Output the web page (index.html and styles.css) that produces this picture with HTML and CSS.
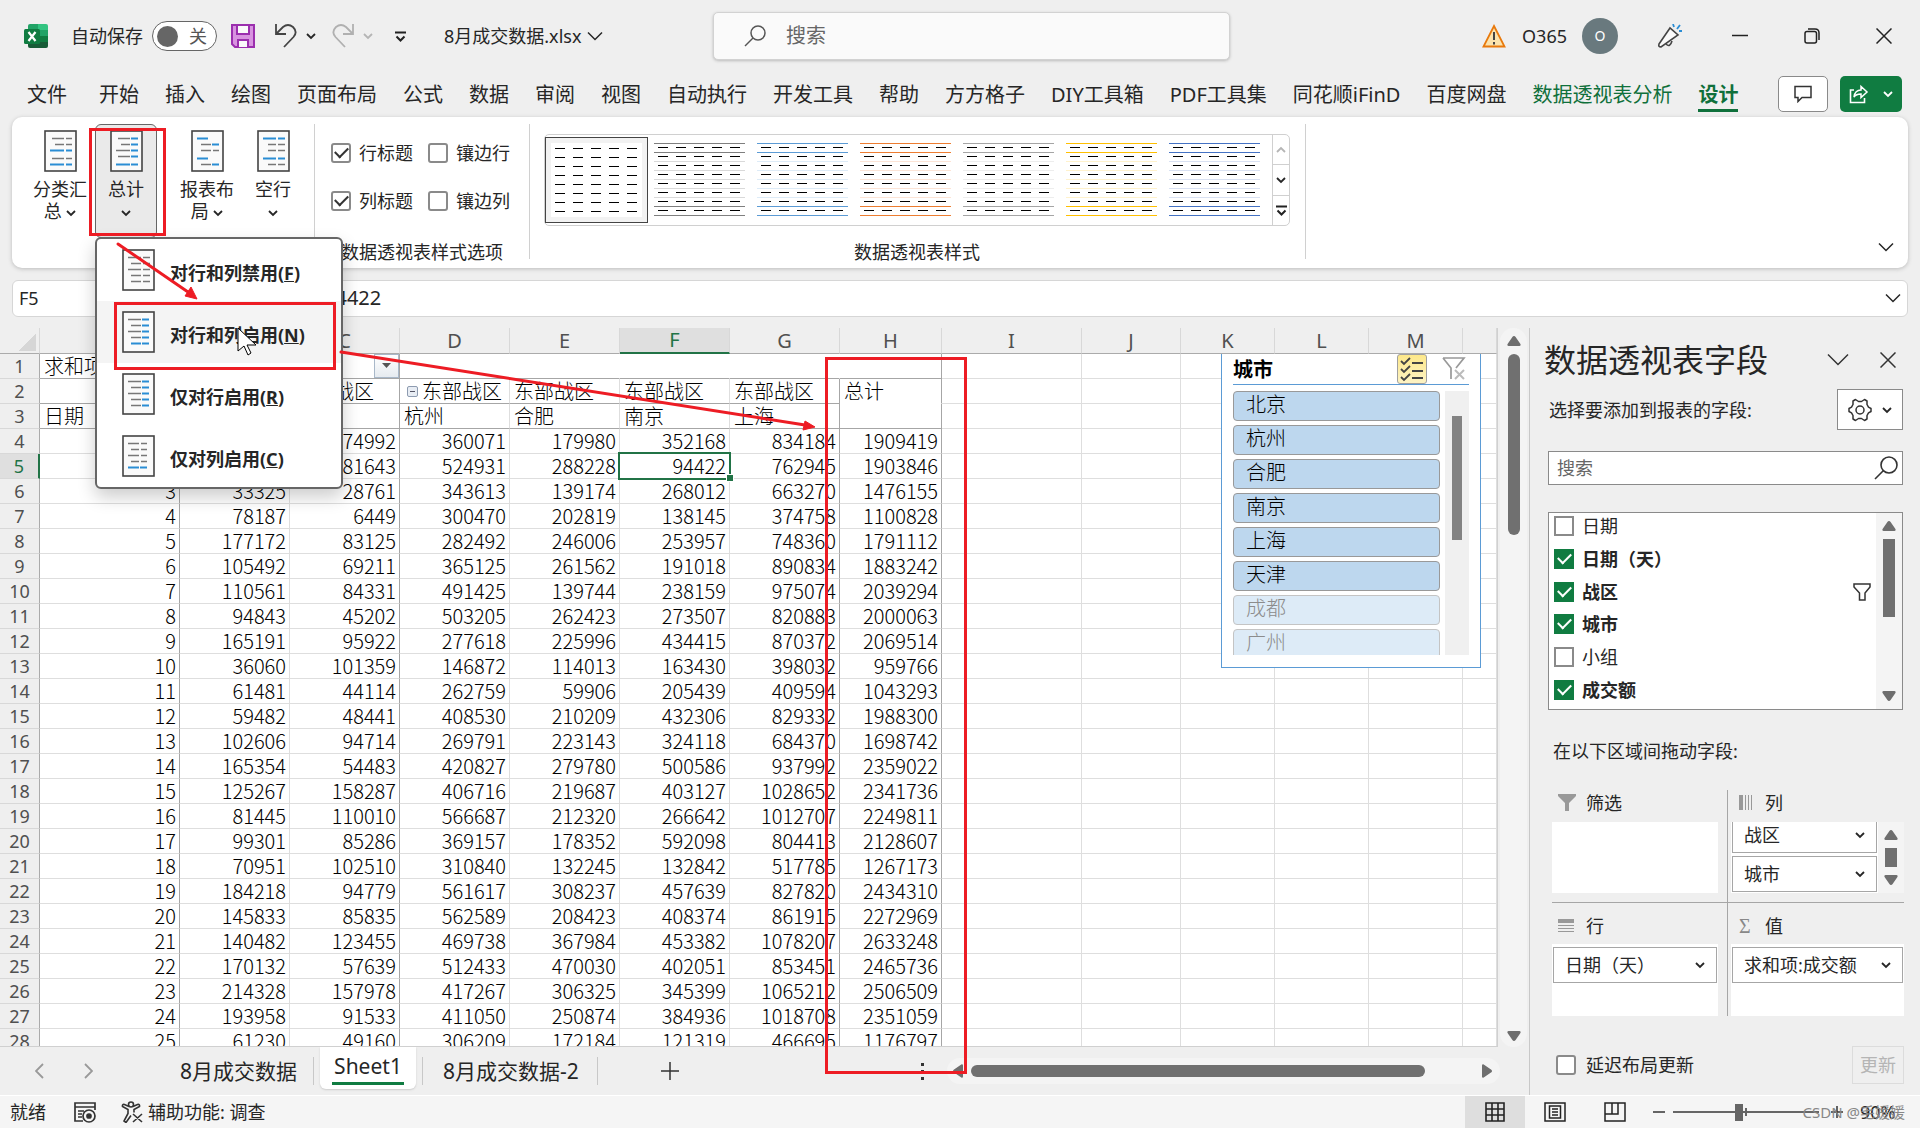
FILE: index.html
```html
<!DOCTYPE html>
<html lang="zh-CN">
<head>
<meta charset="utf-8">
<title>8月成交数据.xlsx - Excel</title>
<link rel="stylesheet" href="styles.css">
</head>
<body>
<svg class="defs" aria-hidden="true">
  <symbol id="chev" viewBox="0 0 10 10"><path d="M1 3l4 4 4-4" fill="none" stroke="currentColor" stroke-width="1.800"/></symbol>
  <symbol id="chev-wide" viewBox="0 0 16 10"><path d="M1 1.500l7 7 7-7" fill="none" stroke="currentColor" stroke-width="1.500"/></symbol>
  <symbol id="tri" viewBox="0 0 14 10"><path d="M7 0q1 0 1.600 1l5 7.300Q14 10 12.500 10h-11Q0 10 .4 8.300l5-7.300Q6 0 7 0z" fill="#6e6e6e"/></symbol>
</svg>

<header class="titlebar">
  <div class="quick">
    <svg class="logo" width="24" height="24" viewBox="0 0 24 24"><path d="M6 0h9v6H4V2q0-2 2-2z" fill="#21a366"/><path d="M14 0h8q2 0 2 2v4H14z" fill="#33c481"/><path d="M4 6h10v12H4z" fill="#107c41"/><path d="M14 6h10v6H14z" fill="#21a366"/><path d="M14 12h10v6H14z" fill="#107c41"/><path d="M4 18h20v4q0 2-2 2H6q-2 0-2-2z" fill="#185c37"/><rect y="5" width="16" height="15" rx="1.500" fill="#107c41"/><path d="M4.500 8l7 9M11.500 8l-7 9" stroke="#fff" stroke-width="2.200"/></svg>
    <label class="autosave" for="autosave">自动保存</label>
    <span class="toggle"><input id="autosave" type="checkbox" role="switch"><span>关</span></span>
    <button class="plain save" aria-label="保存"><svg width="24" height="24" viewBox="0 0 24 24"><path d="M1 1h22v22H4l-3-3z" fill="#d893e0" stroke="#9b2fae" stroke-width="2"/><path d="M6 1h12v9H6z" fill="#fafafa" stroke="#9b2fae" stroke-width="2"/><path d="M7 23v-7h10v7" fill="#fafafa" stroke="#9b2fae" stroke-width="2"/></svg></button>
    <button class="plain undo" aria-label="撤消"><svg width="22" height="24" viewBox="0 0 22 24"><path d="M1 0v10h10M1.500 9.500L8 3q5-4 10 0 5 5 .5 10L9 23" fill="none" stroke="#444" stroke-width="1.800"/></svg></button>
    <svg class="sm" width="10" height="10"><use href="#chev"/></svg>
    <button class="plain redo" aria-label="恢复"><svg width="22" height="24" viewBox="0 0 22 24"><path d="M21 0v10H11M20.500 9.500L14 3Q9-1 4 3-1 8 3.500 13l9.500 10" fill="none" stroke="#b0b0b0" stroke-width="1.800"/></svg></button>
    <svg class="sm dim" width="10" height="10"><use href="#chev"/></svg>
    <button class="plain custom" aria-label="自定义快速访问工具栏"><svg width="11" height="11" viewBox="0 0 11 11"><path d="M0 1.500h11M1.500 5.500l4 4 4-4" fill="none" stroke="#222" stroke-width="2"/></svg></button>
    <button class="plain filename">8月成交数据.xlsx <svg width="16" height="10"><use href="#chev-wide"/></svg></button>
  </div>
  <label class="search"><svg width="22" height="22" viewBox="0 0 22 22"><circle cx="14" cy="8" r="7" fill="none" stroke="#555" stroke-width="1.500"/><path d="M9 13l-8 8" stroke="#555" stroke-width="1.500"/></svg><input type="text" placeholder="搜索" aria-label="搜索"></label>
  <div class="account">
    <svg width="24" height="24" viewBox="0 0 24 24"><path d="M12 2l10.500 20.500h-21z" fill="#fbe3ad" stroke="#e8790c" stroke-width="1.800"/><path d="M12 8v8M12 18v2.500" stroke="#444" stroke-width="2"/></svg>
    <span class="user">O365</span><span class="avatar">O</span>
    <button class="plain mega" aria-label="即将推出"><svg width="25" height="25" viewBox="0 0 25 25" fill="none"><path d="M2 20L13 4l8 7-17 12q-3 0-2-3z" fill="#fafafa" stroke="#444" stroke-width="1.600"/><path d="M9 20q4 4 6-3" stroke="#444" stroke-width="1.600"/><path d="M16 0l1 3M23 1l-3 4M25 7h-3" stroke="#2a8dd4" stroke-width="1.800"/></svg></button>
    <button class="plain win" aria-label="最小化"><svg width="16" height="16" viewBox="0 0 16 16"><path d="M0 7.500h16" stroke="#222" stroke-width="1.500"/></svg></button>
    <button class="plain win" aria-label="还原"><svg width="16" height="16" viewBox="0 0 16 16" fill="none" stroke="#222" stroke-width="1.500"><rect x="1" y="3.500" width="11.500" height="11.500" rx="2"/><path d="M4 1h7q4 0 4 4v7"/></svg></button>
    <button class="plain win" aria-label="关闭"><svg width="16" height="16" viewBox="0 0 16 16"><path d="M.5.5l15 15M15.500.5l-15 15" stroke="#222" stroke-width="1.500"/></svg></button>
  </div>
</header>

<nav class="tabs">
  <a href="#">文件</a><a href="#">开始</a><a href="#">插入</a><a href="#">绘图</a><a href="#">页面布局</a><a href="#">公式</a><a href="#">数据</a><a href="#">审阅</a><a href="#">视图</a><a href="#">自动执行</a><a href="#">开发工具</a><a href="#">帮助</a><a href="#">方方格子</a><a href="#">DIY工具箱</a><a href="#">PDF工具集</a><a href="#">同花顺iFinD</a><a href="#">百度网盘</a><a href="#" class="context">数据透视表分析</a><a href="#" class="context active">设计</a>
  <div class="tab-actions">
    <button class="comment" aria-label="批注"><svg width="18" height="18" viewBox="0 0 18 18"><path d="M1 1.500h16v11H8l-4 4v-4H1z" fill="none" stroke="#333" stroke-width="1.500"/></svg></button>
    <button class="share" aria-label="共享"><svg width="20" height="20" viewBox="0 0 20 20"><path d="M5 6H1.500v12.500h14V14" fill="none" stroke="#fff" stroke-width="1.600"/><path d="M5 13q1-7 7-7V2.500l6 5.500-6 5.500V10q-5 0-7 3z" fill="none" stroke="#fff" stroke-width="1.500"/></svg><svg width="10" height="10"><use href="#chev"/></svg></button>
  </div>
</nav>

<section class="ribbon">
  <div class="group layout">
    <button class="big"><svg width="33" height="42" viewBox="0 0 33 42"><rect x="1" y="1" width="31" height="40" fill="#fafafa" stroke="#444" stroke-width="1.600"/><path d="M8 8.500h12m2 0h6M11 14.500h9m2 0h6M8 28.500h12m2 0h6" stroke="#777" stroke-width="1.700"/><path d="M6 20.500h14m2 0h6M6 34.500h14m2 0h6" stroke="#2a8dd4" stroke-width="2"/></svg><span>分类汇<br>总 <svg width="10" height="10"><use href="#chev"/></svg></span></button>
    <button class="big pressed"><svg width="33" height="42" viewBox="0 0 33 42"><rect x="1" y="1" width="31" height="40" fill="#fafafa" stroke="#444" stroke-width="1.600"/><path d="M8 8.500h12M11 14.500h9M6 20.500h14M8 26.500h12" stroke="#777" stroke-width="1.700"/><path d="M21 8.500h7m-7 6h7m-7 6h7m-7 6h7M6 34.500h14m1 0h7" stroke="#2a8dd4" stroke-width="2"/></svg><span>总计<br><svg width="10" height="10"><use href="#chev"/></svg></span></button>
    <button class="big"><svg width="33" height="42" viewBox="0 0 33 42"><rect x="1" y="1" width="31" height="40" fill="#fafafa" stroke="#444" stroke-width="1.600"/><path d="M10 14.500h10M10 20.500h10m2 0h6M10 34.500h10" stroke="#777" stroke-width="1.700"/><path d="M6 8.500h11m4 6h7M6 28.500h11m4 6h7" stroke="#2a8dd4" stroke-width="2"/></svg><span>报表布<br>局 <svg width="10" height="10"><use href="#chev"/></svg></span></button>
    <button class="big"><svg width="33" height="42" viewBox="0 0 33 42"><rect x="1" y="1" width="31" height="40" fill="#fafafa" stroke="#444" stroke-width="1.600"/><path d="M11 14.500h8m2 0h7M11 20.500h8m2 0h7M11 34.500h8m2 0h7" stroke="#777" stroke-width="1.700"/><path d="M6 8.500h13m2 0h7M6 28.500h13m2 0h7" stroke="#2a8dd4" stroke-width="2"/></svg><span>空行<br><svg width="10" height="10"><use href="#chev"/></svg></span></button>
  </div>
  <div class="group options">
    <div class="checks">
      <label><input type="checkbox" checked>行标题</label><label><input type="checkbox">镶边行</label>
      <label><input type="checkbox" checked>列标题</label><label><input type="checkbox">镶边列</label>
    </div>
    <div class="caption">数据透视表样式选项</div>
  </div>
  <div class="group styles">
    <div class="gallery" id="gallery">
      <div class="gallery-scroll">
        <button class="up" aria-label="上一行"><svg width="10" height="10"><use href="#chev"/></svg></button>
        <button aria-label="下一行"><svg width="10" height="10"><use href="#chev"/></svg></button>
        <button aria-label="其他"><svg width="11" height="11" viewBox="0 0 11 11"><path d="M0 1.500h11M1.500 5.500l4 4 4-4" fill="none" stroke="#222" stroke-width="2"/></svg></button>
      </div>
    </div>
    <div class="caption">数据透视表样式</div>
  </div>
  <button class="plain collapse" aria-label="折叠功能区"><svg width="16" height="10"><use href="#chev-wide"/></svg></button>
</section>

<div class="formula"><span class="name">F5</span><span class="value">94422</span><svg width="16" height="10"><use href="#chev-wide"/></svg></div>

<main class="main">
  <section class="workbook">
    <div class="gridrow">
      <div class="gridpane">
        <table class="sheet" id="sheet"></table>
        <div class="slicer">
          <div class="slicer-head"><b>城市</b>
            <button class="multi" aria-label="多选"><svg width="28" height="28" viewBox="0 0 28 28"><path d="M3 6l3 3 6-6M3 14l3 3 6-6M3 22l3 3 6-6M14 8h11M14 16h11M14 23h11" fill="none" stroke="#444" stroke-width="1.800"/></svg></button>
            <button class="plain" aria-label="清除筛选器"><svg width="24" height="24" viewBox="0 0 24 24"><path d="M1 1h21L14 11M9 22V11L1 1" fill="none" stroke="#999" stroke-width="1.700"/><path d="M13 13l9 9M22 13l-9 9" stroke="#bbb" stroke-width="2"/></svg></button>
          </div>
          <div class="slicer-body">
            <div class="slicer-items"><button>北京</button><button>杭州</button><button>合肥</button><button>南京</button><button>上海</button><button>天津</button><button class="off">成都</button><button class="off">广州</button></div>
            <div class="slicer-bar"><i></i></div>
          </div>
        </div>
      </div>
      <div class="vbar"><svg width="14" height="10"><use href="#tri"/></svg><i></i><svg class="down" width="14" height="10"><use href="#tri"/></svg></div>
    </div>
    <div class="sheettabs">
      <button class="plain nav" aria-label="上一张"><svg width="9" height="16" viewBox="0 0 9 16"><path d="M8 1L1 8l7 7" fill="none" stroke="#999" stroke-width="1.800"/></svg></button>
      <button class="plain nav" aria-label="下一张"><svg width="9" height="16" viewBox="0 0 9 16"><path d="M1 1l7 7-7 7" fill="none" stroke="#999" stroke-width="1.800"/></svg></button>
      <a class="first" href="#">8月成交数据</a><a class="current" href="#"><span>Sheet1</span></a><a class="last" href="#">8月成交数据-2</a>
      <button class="plain add" aria-label="新工作表"><svg width="18" height="18" viewBox="0 0 18 18"><path d="M9 0v18M0 9h18" stroke="#333" stroke-width="1.500"/></svg></button>
      <svg class="dots" width="3" height="17" viewBox="0 0 3 17"><path d="M0 0h3v3H0zM0 7h3v3H0zM0 14h3v3H0z" fill="#333"/></svg>
      <div class="hbar"><svg class="left" width="14" height="10"><use href="#tri"/></svg><i></i><svg class="right" width="14" height="10"><use href="#tri"/></svg></div>
    </div>
  </section>

  <aside class="pane">
    <div class="pane-title"><h2>数据透视表字段</h2>
      <button class="plain" aria-label="任务窗格选项"><svg width="22" height="14" viewBox="0 0 22 14"><path d="M1 1.500l10 10 10-10" fill="none" stroke="#333" stroke-width="1.500"/></svg></button>
      <button class="plain" aria-label="关闭"><svg width="16" height="16" viewBox="0 0 16 16"><path d="M.5.5l15 15M15.500.5l-15 15" stroke="#333" stroke-width="1.500"/></svg></button></div>
    <div class="pane-tools"><span>选择要添加到报表的字段:</span>
      <button class="gear" aria-label="工具"><svg width="24" height="24" viewBox="0 0 24 24" fill="none" stroke="#333" stroke-width="1.500" stroke-linejoin="round"><path d="M7.500 1.500l3 2h3l3-2 2.500 1.500v3.500l1.500 2.700 2.500 1.300v3l-2.500 1.300-1.500 2.700V21l-2.500 1.500-3-2h-3l-3 2L5 21v-3.500l-1.500-2.700L1 13.500v-3l2.500-1.300L5 6.500V3z"/><circle cx="12" cy="12" r="4"/></svg><svg width="10" height="10"><use href="#chev"/></svg></button></div>
    <label class="pane-search"><input type="text" placeholder="搜索" aria-label="搜索字段"><svg width="24" height="24" viewBox="0 0 24 24"><circle cx="15" cy="9" r="8" fill="none" stroke="#333" stroke-width="1.600"/><path d="M9.500 14.500L1 23" stroke="#333" stroke-width="1.600"/></svg></label>
    <div class="fields">
      <div class="field-list">
        <label><input type="checkbox">日期</label>
        <label class="on"><input type="checkbox" checked>日期（天）</label>
        <label class="on"><input type="checkbox" checked>战区<svg width="18" height="18" viewBox="0 0 18 18"><path d="M1 1h16v3l-5 6v7H6.500v-7L1 4z" fill="none" stroke="#333" stroke-width="1.500"/></svg></label>
        <label class="on"><input type="checkbox" checked>城市</label>
        <label><input type="checkbox">小组</label>
        <label class="on"><input type="checkbox" checked>成交额</label>
      </div>
      <div class="field-bar"><svg width="14" height="10"><use href="#tri"/></svg><i></i><svg class="down" width="14" height="10"><use href="#tri"/></svg></div>
    </div>
    <p class="hint">在以下区域间拖动字段:</p>
    <div class="areas">
      <section class="area"><h3><svg width="18" height="18" viewBox="0 0 18 18"><path d="M0 0h18v2l-7 7v8H7V9L0 2z" fill="#999"/></svg>筛选</h3><div class="well"></div></section>
      <section class="area right"><h3><svg width="14" height="16" viewBox="0 0 14 16"><path d="M0 0h4v15H0zM6 0h1v15H6zM9 0h1v15H9zM12 0h1v15h-1z" fill="#999"/></svg>列</h3>
        <div class="well scrolled"><div class="drops"><span class="drop"><select aria-label="战区"><option>战区</option></select><svg width="10" height="10"><use href="#chev"/></svg></span><span class="drop"><select aria-label="城市"><option>城市</option></select><svg width="10" height="10"><use href="#chev"/></svg></span></div>
        <div class="well-bar"><svg width="14" height="10"><use href="#tri"/></svg><i></i><svg class="down" width="14" height="10"><use href="#tri"/></svg></div></div></section>
      <section class="area low"><h3><svg width="16" height="14" viewBox="0 0 16 14"><path d="M0 0h16v4H0zM0 6h16v1H0zM0 9h16v1H0zM0 12h16v1H0z" fill="#999"/></svg>行</h3><div class="well pad"><span class="drop"><select aria-label="日期（天）"><option>日期（天）</option></select><svg width="10" height="10"><use href="#chev"/></svg></span></div></section>
      <section class="area right low"><h3><span class="sigma">Σ</span>值</h3><div class="well pad"><span class="drop"><select aria-label="求和项:成交额"><option>求和项:成交额</option></select><svg width="10" height="10"><use href="#chev"/></svg></span></div></section>
    </div>
    <div class="defer"><label><input type="checkbox">延迟布局更新</label><button disabled>更新</button></div>
  </aside>
</main>

<footer class="status">
  <span>就绪</span>
  <svg class="macro" width="22" height="21" viewBox="0 0 22 21" fill="none" stroke="#333" stroke-width="1.700"><path d="M9 19H1V1h20v7M1 5h20M4 9h6M4 12h4M4 15h4"/><circle cx="15" cy="14" r="6"/><circle cx="15" cy="14" r="2" fill="#333"/></svg>
  <svg class="access" width="22" height="22" viewBox="0 0 22 22" fill="none" stroke="#333" stroke-width="1.600"><circle cx="10" cy="3.500" r="2.500"/><path d="M8 5.500L3.500 3.500Q1 3 1.500 5.500L7 8.500v4L3 20l2 1.500 5-7M12 5.500l4.500-2q2.500-.5 2 2L13 8.500v3M12 13l9 8M21 13l-9 8"/></svg>
  <span>辅助功能: 调查</span>
  <div class="views">
    <button class="plain view sel" aria-label="普通"><svg width="20" height="20" viewBox="0 0 20 20"><path d="M1 1h18v18H1zM1 7h18M1 13h18M7 1v18M13 1v18" fill="none" stroke="#222" stroke-width="1.600"/></svg></button>
    <button class="plain view" aria-label="页面布局"><svg width="22" height="20" viewBox="0 0 22 20"><path d="M1 1h20v18H1zM5.500 4h11v12h-11zM8 7h6M8 10h6M8 13h6" fill="none" stroke="#222" stroke-width="1.500"/></svg></button>
    <button class="plain view" aria-label="分页预览"><svg width="22" height="20" viewBox="0 0 22 20"><path d="M1 1h20v18H1zM1 12h13V1M8 1v11" fill="none" stroke="#222" stroke-width="1.500"/></svg></button>
    <button class="plain" aria-label="缩小"><svg width="12" height="12" viewBox="0 0 12 12"><path d="M0 6h12" stroke="#333" stroke-width="1.500"/></svg></button>
    <input class="zoom" type="range" min="0" max="100" value="45" aria-label="缩放">
    <button class="plain" aria-label="放大"><svg width="12" height="12" viewBox="0 0 12 12"><path d="M0 6h12M6 0v12" stroke="#333" stroke-width="1.500"/></svg></button>
    <span class="percent">90%</span>
  </div>
  <span class="mark">CSDN @毛媛媛</span>
</footer>

<div class="menu" role="menu">
  <button role="menuitem"><svg width="33" height="42" viewBox="0 0 33 42"><rect x="1" y="1" width="31" height="40" fill="#fafafa" stroke="#444" stroke-width="1.600"/><path d="M6 8.500h13m2 0h7M9 14.500h10m2 0h7M6 20.500h13m2 0h7M9 26.500h10m2 0h7M9 32.500h10m2 0h7" stroke="#777" stroke-width="1.700"/></svg><span>对行和列禁用(<u>F</u>)</span></button>
  <button role="menuitem" class="hover"><svg width="33" height="42" viewBox="0 0 33 42"><rect x="1" y="1" width="31" height="40" fill="#fafafa" stroke="#444" stroke-width="1.600"/><path d="M6 8.500h13M9 14.500h10M6 20.500h13M9 26.500h10" stroke="#777" stroke-width="1.700"/><path d="M20 8.500h7m-7 6h7m-7 6h7m-7 6h7M9 32.500h10m1 0h7" stroke="#2a8dd4" stroke-width="2"/></svg><span>对行和列启用(<u>N</u>)</span></button>
  <button role="menuitem"><svg width="33" height="42" viewBox="0 0 33 42"><rect x="1" y="1" width="31" height="40" fill="#fafafa" stroke="#444" stroke-width="1.600"/><path d="M6 8.500h13M9 14.500h10M6 20.500h13M9 26.500h10M9 32.500h10" stroke="#777" stroke-width="1.700"/><path d="M20 8.500h7m-7 6h7m-7 6h7m-7 6h7m-7 6h7" stroke="#2a8dd4" stroke-width="2"/></svg><span>仅对行启用(<u>R</u>)</span></button>
  <button role="menuitem"><svg width="33" height="42" viewBox="0 0 33 42"><rect x="1" y="1" width="31" height="40" fill="#fafafa" stroke="#444" stroke-width="1.600"/><path d="M6 8.500h11m2 0h6M9 14.500h8m2 0h6M6 20.500h11m2 0h6M9 26.500h8m2 0h6" stroke="#777" stroke-width="1.700"/><path d="M6 32.500h11m1 0h7" stroke="#2a8dd4" stroke-width="2"/></svg><span>仅对列启用(<u>C</u>)</span></button>
</div>

<svg class="marks" width="970" height="1080" viewBox="0 0 970 1080" fill="none" stroke="#ed1c24" stroke-width="3" aria-hidden="true">
  <path d="M238 328v23l6-5 4 9 3-2-4-8h9z" fill="#fff" stroke="#000" stroke-width="1"/>
  <rect x="90.500" y="129.500" width="74" height="105"/>
  <rect x="115.500" y="303.500" width="219" height="65"/>
  <rect x="826.500" y="358.500" width="139" height="714"/>
  <path d="M118 244l70 48M341 352l464 73" stroke-linecap="round"/>
  <path d="M197 299l-12-3 6-9zM815 427l-12 3 2-9z" fill="#ed1c24" stroke-width="1"/>
</svg>
<script src="script.js"></script>
</body>
</html>
```
FILE: styles.css
```css
* { box-sizing: border-box; }
body {
  margin: 0; height: 100vh; display: flex; flex-direction: column; overflow: hidden;
  background: #efefef; color: #262626;
  font: 18px/22px "Noto Sans", "Noto Sans CJK SC", sans-serif;
}
button, input, select { font: inherit; color: inherit; margin: 0; }
button { padding: 0; }
svg { display: block; flex: none; }
a { color: inherit; text-decoration: none; }
.defs { position: absolute; width: 0; height: 0; }
.plain { border: 0; background: none; display: flex; align-items: center; }
input[type=checkbox] {
  appearance: none; flex: none; width: 20px; height: 20px;
  border: 2px solid #8a8a8a; border-radius: 3px; background: #fff;
  display: grid; place-items: center;
}
input[type=checkbox]:checked::before {
  content: ""; width: 11px; height: 6px; margin-bottom: 4px;
  border: solid #333; border-width: 0 0 2px 2px; transform: rotate(-45deg);
}

/* title bar */
.titlebar { flex: none; height: 72px; display: grid; grid-template-columns: 713px minmax(200px, 517px) 1fr; align-items: center; }
.quick { display: flex; align-items: center; padding-left: 24px; }
.autosave { margin: 0 9px 0 23px; }
.toggle { width: 65px; height: 30px; border: 1px solid #666; border-radius: 15px; background: #fff; display: flex; align-items: center; gap: 11px; padding-left: 4px; color: #555; }
.toggle input[type=checkbox] { width: 21px; height: 21px; border: 0; border-radius: 50%; background: #666; }
.save { margin-left: 14px; }
.undo { margin: 0 9px 0 20px; }
.redo { margin: 0 9px 0 16px; }
.dim { color: #b5b5b5; }
.custom { margin: 0 38px 0 22px; }
.filename { gap: 6px; }
.search { height: 48px; border: 1px solid #d2d2d2; border-radius: 5px; background: #fafafa; box-shadow: 0 1px 3px #bbb; display: flex; align-items: center; gap: 20px; padding: 0 30px; }
.search input { flex: 1; min-width: 0; border: 0; background: none; font-size: 20px; padding: 0; }
input::placeholder { color: #666; opacity: 1; }
.account { display: flex; align-items: center; justify-content: flex-end; padding-right: 28px; }
.user { margin: 0 15px 0 16px; }
.avatar { width: 36px; height: 36px; border-radius: 50%; background: #69797e; color: #fff; display: grid; place-items: center; font-size: 14px; }
.mega { margin: 0 50px 0 39px; }
.win + .win { margin-left: 56px; }

/* ribbon tabs */
.tabs { flex: none; height: 45px; display: flex; gap: 26px; padding: 4px 18px 5px 27px; font-size: 20px; white-space: nowrap; }
.tabs a { height: 36px; line-height: 37px; }
.tabs a:first-child { margin-right: 6px; }
.tabs .context { color: #0f703b; }
.tabs .active { font-weight: 700; border-bottom: 3px solid #0f703b; }
.tab-actions { margin-left: auto; display: flex; gap: 12px; }
.comment { width: 50px; height: 36px; display: grid; place-items: center; border: 1px solid #8a8a8a; border-radius: 5px; background: #fff; }
.share { width: 62px; height: 36px; display: flex; align-items: center; justify-content: center; gap: 14px; border: 0; border-radius: 5px; background: #107c41; color: #fff; }

/* ribbon */
.ribbon { flex: none; height: 151px; margin: 0 12px; background: #fff; border-radius: 10px; box-shadow: 0 1px 4px #bbb; display: flex; padding: 7px 0 9px; }
.group { border-right: 1px solid #d0d0d0; }
.layout { width: 303px; display: flex; padding-left: 15px; }
.big { border: 0; background: none; width: 66px; height: 114px; padding-top: 6px; display: flex; flex-direction: column; align-items: center; gap: 6px; white-space: nowrap; }
.big span svg { display: inline; vertical-align: 0; }
.big:nth-child(3) { margin-left: 17px; }
.pressed { width: 62px; margin-left: 2px; border: 1px solid #666; border-radius: 6px; background: #eaeaea; padding-top: 5px; }
.options { width: 215px; padding: 0 16px; display: flex; flex-direction: column; }
.checks { display: grid; grid-template-columns: 97px auto; row-gap: 26px; padding-top: 18px; white-space: nowrap; }
.checks label { display: flex; align-items: center; gap: 8px; }
.caption { margin: auto 0 -4px; text-align: center; white-space: nowrap; }
.styles { width: 776px; padding: 10px 15px 0 14px; display: flex; flex-direction: column; }
.gallery { height: 92px; border: 1px solid #d0d0d0; border-radius: 5px; display: flex; gap: 12px; }
.thumb { border: 0; background: none; padding: 8px 0 0; display: flex; align-items: flex-start; }
.thumb:first-child { width: 103px; margin: 2px 0; padding: 6px 5px; border: 1px solid #444; box-shadow: inset 0 0 0 5px #f2f2f2; }
.thumb:nth-child(2) { margin-left: -6px; }
.gallery-scroll { margin-left: auto; width: 22px; border-left: 1px solid #d0d0d0; display: flex; flex-direction: column; }
.gallery-scroll button { flex: 1; border: 0; background: none; display: grid; place-items: center; }
.gallery-scroll button + button { border-top: 1px solid #d0d0d0; }
.gallery-scroll .up { color: #b5b5b5; }
.up svg { transform: rotate(180deg); }
.collapse { margin: auto 14px 7px auto; }

/* formula bar */
.formula { flex: none; height: 37px; margin: 12px 12px 0; padding: 0 6px 2px; border: 1px solid #d6d6d6; border-radius: 6px; background: #fff; display: flex; align-items: center; font-size: 20px; }
.formula .name { width: 305px; font-size: 18px; }
.formula .value { flex: 1; }

/* worksheet */
.main { flex: 1; min-height: 0; display: flex; padding-top: 11px; }
.workbook { flex: 1; min-width: 0; display: flex; flex-direction: column; }
.gridrow { flex: 1; min-height: 0; display: flex; }
.gridpane { flex: 1; min-width: 0; position: relative; overflow: hidden; border-bottom: 1px solid #d0d0d0; border-right: 1px solid #d0d0d0; }
.sheet { width: 100%; table-layout: fixed; border-collapse: separate; border-spacing: 0; background: #fff; color: #000; font: 300 20px/24px "Noto Sans CJK SC", sans-serif; }
.sheet th { font: 400 20px/24px "Noto Sans", sans-serif; color: #505050; background: #efefef; padding: 0; }
.sheet thead th { height: 26px; border-bottom: 1px solid #ababab; border-right: 1px solid #d8d8d8; }
.sheet tbody th { font-size: 18px; border-right: 1px solid #ababab; border-bottom: 1px solid #d8d8d8; text-align: center; }
.sheet thead .sel { background: #dfdfdf; color: #217346; border-bottom: 2px solid #217346; }
.sheet tbody .sel { background: #dfdfdf; color: #217346; border-right: 2px solid #217346; }
.sheet .corner::after { content: ""; display: block; margin: 2px 3px 0 auto; width: 18px; height: 18px; background: linear-gradient(135deg, transparent 50%, #d6d6d6 50%); }
.sheet td { height: 25px; padding: 0 3px; text-align: right; border-right: 1px solid #dedede; border-bottom: 1px solid #dedede; white-space: nowrap; }
.sheet .text td { text-align: left; padding-left: 4px; }
.sheet .dr { border-right-color: #a6a6a6; }
.sheet .db { border-bottom-color: #a6a6a6; }
.sheet .nr { border-right-color: transparent; }
.sheet .nb { border-bottom-color: transparent; }
.sheet .active { position: relative; }
.sheet .active::before { content: ""; position: absolute; inset: -2px; border: 2px solid #217346; }
.sheet .active::after { content: ""; position: absolute; right: -4px; bottom: -3px; width: 6px; height: 6px; background: #217346; outline: 1px solid #fff; }
.cellbox { display: flex; align-items: center; }
.minus { width: 11px; height: 11px; margin: 0 4px 0 3px; border: 1px solid #8d9bb0; border-radius: 2px; background: linear-gradient(#556 0 0) center / 5px 1px no-repeat #e8edf4; }
.filter { width: 25px; height: 24px; margin: 0 -3px 0 auto; border: 1px solid #a9b8c9; background: linear-gradient(#fff, #e6ebf0); display: grid; place-items: center; }

.slicer { position: absolute; left: 1221px; top: 26px; width: 260px; height: 314px; padding: 0 11px; border: 1px solid #5b9bd5; border-top: 0; background: #fff; font: 20px/24px "Noto Sans CJK SC", sans-serif; color: #000; }
.slicer-head { height: 31px; display: flex; align-items: center; border-bottom: 1px solid #5b9bd5; }
.multi { width: 30px; height: 30px; margin: 0 15px 0 auto; border: 1px solid #a0a0a0; border-radius: 3px; background: linear-gradient(#fde88a, #fdf3c4); }
.slicer-head .plain { margin-right: 3px; }
.slicer-body { display: flex; gap: 5px; margin-top: 6px; height: 264px; overflow: hidden; }
.slicer-items { flex: 1; display: flex; flex-direction: column; gap: 4px; }
.slicer-items button { flex: none; height: 30px; padding: 0 12px 4px; text-align: left; font-weight: 300; border: 1px solid #999; border-radius: 4px; background: #bdd7ee; }
.slicer-items .off { color: #8c8c8c; background: #ddebf7; border-color: #c4c4c4; }
.slicer-bar { width: 24px; background: #f0f0f0; padding: 25px 7px; }
.slicer-bar i { display: block; height: 124px; background: #838383; }

.vbar { width: 27px; margin: 0 2px; border-radius: 14px; background: #f4f4f4; display: flex; flex-direction: column; align-items: center; padding: 8px 0 6px; }
.vbar i { width: 12px; height: 181px; margin-top: 8px; border-radius: 6px; background: #707070; }
.down { transform: rotate(180deg); margin-top: auto; }

.sheettabs { flex: none; height: 48px; display: flex; align-items: center; padding-left: 35px; font-size: 21px; white-space: nowrap; }
.nav { width: 49px; }
.sheettabs a { line-height: 28px; border-right: 1px solid #c8c8c8; }
.sheettabs .first { padding: 0 16px 0 47px; }
.sheettabs .current { align-self: flex-start; margin: 0 6px; height: 42px; padding: 4px 12px 0; border: 0; border-radius: 0 0 6px 6px; background: #fff; box-shadow: 0 1px 2px #ccc; }
.current span { display: block; height: 34px; width: 72px; text-align: center; line-height: 30px; border-bottom: 3px solid #107c41; }
.sheettabs .last { border-left: 1px solid #c8c8c8; padding: 0 18px 0 20px; }
.add { margin-left: 63px; }
.dots { margin-left: auto; }
.hbar { width: 553px; height: 26px; margin: 0 29px 0 23px; border-radius: 13px; background: #f4f4f4; display: flex; align-items: center; padding: 0 6px 0 4px; }
.hbar i { width: 454px; height: 12px; border-radius: 6px; background: #707070; margin-left: 6px; }
.hbar .left { transform: rotate(-90deg); }
.hbar .right { transform: rotate(90deg); margin-left: auto; }

/* field pane */
.pane { flex: none; width: 391px; border-left: 1px solid #c8c8c8; padding: 4px 16px 0 15px; display: flex; flex-direction: column; }
.pane-title { display: flex; align-items: center; height: 56px; padding: 0 8px 0 0; gap: 31px; }
.pane-title h2 { margin: 0 auto 0 -1px; font-size: 32px; line-height: 44px; font-weight: 400; white-space: nowrap; }
.pane-tools { display: flex; justify-content: space-between; align-items: center; height: 41px; padding: 0 1px 0 4px; margin-top: 1px; }
.gear { width: 66px; height: 41px; border: 1px solid #8a8a8a; background: #fff; display: flex; align-items: center; justify-content: center; gap: 10px; }
.pane-search { height: 34px; margin: 21px 1px 27px 3px; border: 1px solid #8a8a8a; background: #fff; display: flex; align-items: center; padding: 0 4px 0 8px; }
.pane-search input { flex: 1; min-width: 0; border: 0; padding: 0; background: none; }
.fields { height: 198px; margin: 0 1px 0 3px; border: 1px solid #8a8a8a; background: #fff; display: flex; }
.field-list { flex: 1; display: grid; padding: 0 5px; margin: -3px 0 3px; }
.field-list label { display: flex; align-items: center; gap: 8px; }
.field-list svg { margin-left: auto; }
.field-list input[type=checkbox] { border-radius: 0; }
.field-list input[type=checkbox]:checked { border-color: #107c41; background: #107c41; }
.field-list input[type=checkbox]:checked::before { border-color: #fff; }
.on { font-weight: 700; }
.field-bar, .well-bar { width: 26px; background: #f4f4f4; display: flex; flex-direction: column; align-items: center; padding: 8px 0; }
.field-bar i { width: 12px; height: 78px; margin-top: 8px; background: #707070; }
.hint { margin: 30px 0 28px 8px; }
.areas { margin-left: 7px; display: grid; grid-template-columns: 176px 1fr; }
.area { border-right: 1px solid #a6a6a6; border-bottom: 1px solid #a6a6a6; padding: 0 9px 9px 0; }
.area.right { border-right: 0; padding: 0 0 9px 3px; }
.area.low { border-bottom: 0; padding-bottom: 0; }
.area h3 { margin: 0; height: 32px; padding: 0 0 6px 6px; font-size: 18px; font-weight: 400; display: grid; grid-template-columns: 28px 1fr; align-items: center; }
.area.right h3 { padding-left: 8px; grid-template-columns: 26px 1fr; }
.area.low h3 { height: 41px; padding-top: 4px; padding-bottom: 0; }
.sigma { font: 20px/22px "Liberation Serif", serif; color: #888; }
.well { height: 71px; background: #fff; overflow: hidden; }
.well.pad { height: 72px; padding: 3px 1px; }
.scrolled { display: flex; justify-content: space-between; background: #f4f4f4; }
.drops { width: 147px; padding: 0 1px; background: #fff; }
.drops .drop:first-child { margin: -5px 0 3px; }
.drop { display: grid; align-items: center; }
.drop > * { grid-area: 1 / 1; }
.drop select { height: 36px; width: 100%; appearance: none; border: 1px solid #a6a6a6; border-radius: 0; background: #fff; padding: 0 11px; }
.drop svg { justify-self: end; margin-right: 12px; pointer-events: none; }
.well-bar i { width: 12px; height: 19px; margin-top: 8px; background: #707070; }
.defer { margin: 30px 0 0 11px; display: flex; justify-content: space-between; align-items: center; }
.defer label { display: flex; gap: 10px; align-items: center; }
.defer button { width: 52px; height: 38px; border: 1px solid #dcdcdc; background: none; color: #b5b5b5; }

/* status bar */
.status { flex: none; height: 33px; border-top: 1px solid #fff; background: #f5f5f5; display: flex; align-items: center; padding-left: 10px; position: relative; white-space: nowrap; }
.macro { margin: 0 25px 0 28px; }
.access { margin-right: 5px; }
.views { margin-left: auto; display: flex; align-items: center; align-self: stretch; padding-right: 22px; }
.view { width: 60px; align-self: stretch; justify-content: center; }
.view.sel { background: #dedede; }
.views > .view + .plain:not(.view) { margin-left: 8px; }
.zoom { appearance: none; width: 146px; height: 18px; margin: 0 12px 0 8px; background: linear-gradient(#666 0 0) center / 100% 2px no-repeat, linear-gradient(#666 0 0) 50% / 2px 8px no-repeat; }
.zoom::-webkit-slider-thumb { appearance: none; width: 8px; height: 17px; background: #666; }
.percent { width: 38px; margin-left: 17px; }
.mark { position: absolute; right: 15px; top: 5px; font-size: 15px; color: #888; }

/* overlays */
.menu { position: absolute; left: 95px; top: 237px; width: 248px; border: 2px solid #666; border-radius: 6px; background: #fff; box-shadow: 0 8px 18px #0003; }
.menu button { width: 100%; height: 62px; border: 0; background: none; display: flex; align-items: center; gap: 15px; padding-left: 25px; font-weight: 700; white-space: nowrap; }
.menu button span { padding-top: 6px; }
.menu .hover { background: #f4f4f4; }
.marks { position: absolute; left: 0; top: 0; pointer-events: none; }
```
FILE: script.js
```js
const widths = [40, 140, 110, 110, 110, 110, 110, 110, 102, 140, 99, 94, 94, 94, 0];
const letters = ['A', 'B', 'C', 'D', 'E', 'F', 'G', 'H', 'I', 'J', 'K', 'L', 'M', ''];
const data = [
  [1, 108024, 74992, 360071, 179980, 352168, 834184, 1909419],
  [2, 151677, 81643, 524931, 288228, 94422, 762945, 1903846],
  [3, 33325, 28761, 343613, 139174, 268012, 663270, 1476155],
  [4, 78187, 6449, 300470, 202819, 138145, 374758, 1100828],
  [5, 177172, 83125, 282492, 246006, 253957, 748360, 1791112],
  [6, 105492, 69211, 365125, 261562, 191018, 890834, 1883242],
  [7, 110561, 84331, 491425, 139744, 238159, 975074, 2039294],
  [8, 94843, 45202, 503205, 262423, 273507, 820883, 2000063],
  [9, 165191, 95922, 277618, 225996, 434415, 870372, 2069514],
  [10, 36060, 101359, 146872, 114013, 163430, 398032, 959766],
  [11, 61481, 44114, 262759, 59906, 205439, 409594, 1043293],
  [12, 59482, 48441, 408530, 210209, 432306, 829332, 1988300],
  [13, 102606, 94714, 269791, 223143, 324118, 684370, 1698742],
  [14, 165354, 54483, 420827, 279780, 500586, 937992, 2359022],
  [15, 125267, 158287, 406716, 219687, 403127, 1028652, 2341736],
  [16, 81445, 110010, 566687, 212320, 266642, 1012707, 2249811],
  [17, 99301, 85286, 369157, 178352, 592098, 804413, 2128607],
  [18, 70951, 102510, 310840, 132245, 132842, 517785, 1267173],
  [19, 184218, 94779, 561617, 308237, 457639, 827820, 2434310],
  [20, 145833, 85835, 562589, 208423, 408374, 861915, 2272969],
  [21, 140482, 123455, 469738, 367984, 453382, 1078207, 2633248],
  [22, 170132, 57639, 512433, 470030, 402051, 853451, 2465736],
  [23, 214328, 157978, 417267, 306325, 345399, 1065212, 2506509],
  [24, 193958, 91533, 411050, 250874, 384936, 1018708, 2351059],
  [25, 61230, 49160, 306209, 172184, 121319, 466695, 1176797]
];
const filter = '<span class="filter"><svg width="9" height="6" viewBox="0 0 9 6"><path d="M0 0h9L4.500 5z" fill="#555"/></svg></span>';
const head = [
  ['求和项:成交额', '战区', `<span class="cellbox">城市${filter}</span>`],
  ['', '北部战区', '北部战区', '<span class="cellbox"><i class="minus"></i>东部战区</span>', '东部战区', '东部战区', '东部战区', '总计'],
  ['日期', '北京', '天津', '杭州', '合肥', '南京', '上海']
];
const rows = head.concat(data);

let html = '<colgroup>' + widths.map(w => w ? `<col style="width:${w}px">` : '<col>').join('') + '</colgroup>';
html += '<thead><tr><th class="corner"></th>' + letters.map(l => `<th class="${l === 'F' ? 'sel' : ''}">${l}</th>`).join('') + '</tr></thead><tbody>';
rows.forEach((row, r) => {
  html += `<tr class="${r < 3 ? 'text' : ''}"><th class="${r === 4 ? 'sel' : ''}">${r + 1}</th>`;
  for (let c = 0; c < 14; c++) {
    const cls = [];
    if (c === 7) cls.push('dr');
    else if (c === 2 || (r > 0 && (c === 0 || c === 6))) cls.push('dr');
    else if (r === 0 && c > 2 && c < 7) cls.push('nr');
    if (r < 3 && c < 8) cls.push(r === 1 && c === 7 ? 'nb' : 'db');
    if (r === 4 && c === 5) cls.push('active');
    html += `<td class="${cls.join(' ')}">${row[c] ?? ''}</td>`;
  }
  html += '</tr>';
});
document.getElementById('sheet').innerHTML = html + '</tbody>';

const themes = [null, ['#7f7f7f', '#d9d9d9'], ['#5b9bd5', '#ddebf7'], ['#ed7d31', '#fce4d6'], ['#a5a5a5', '#ededed'], ['#ffc000', '#fff2cc'], ['#4472c4', '#d9e1f2']];
const thumbs = themes.map((t, i) => {
  let svg = '';
  for (let n = 0; n < 9; n++) {
    if (t) svg += `<path d="M0 ${n * 9 + 0.5}h91" stroke="${t[n > 1 && n < 7 ? 1 : 0]}"/>`;
    if (n < 8) svg += `<path d="M4 ${n * 9 + 4.5}h87" stroke="#000" stroke-dasharray="10 8"/>`;
  }
  return `<button class="thumb" aria-label="样式 ${i + 1}"><svg width="91" height="73" viewBox="0 0 91 73">${svg}</svg></button>`;
});
document.getElementById('gallery').insertAdjacentHTML('afterbegin', thumbs.join(''));
```
